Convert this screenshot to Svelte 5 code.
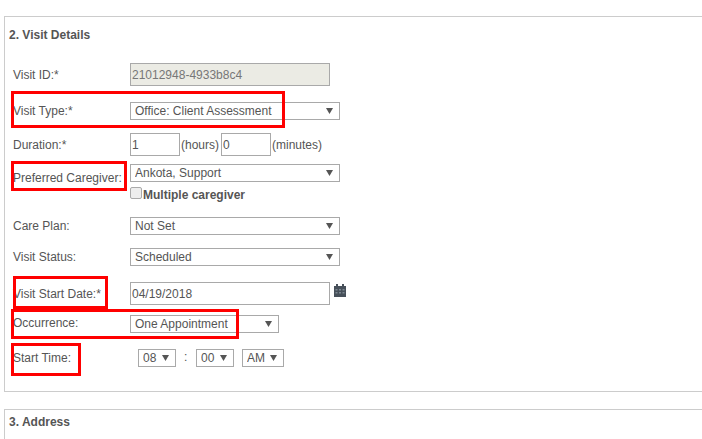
<script>
    // red review marks drawn over the form
    const marks = [
        { x: 11, y: 91, w: 274, h: 37 },
        { x: 11, y: 161, w: 116, h: 30 },
        { x: 13, y: 276, w: 95, h: 33 },
        { x: 11, y: 309, w: 228, h: 30 },
        { x: 11, y: 343, w: 70, h: 33 }
    ];
</script>

{#snippet picker(value, cls)}
    <div class="select {cls}">
        <select><option>{value}</option></select>
        <svg class="arrow" viewBox="0 0 8 8" aria-hidden="true"><path d="M0 1h8L4 8z" /></svg>
    </div>
{/snippet}

<div class="page">
    <section class="panel details">
        <h3>2. Visit Details</h3>

        <div class="row r-id">
            <label>Visit ID:*</label>
            <input class="wide readonly" value="21012948-4933b8c4" readonly />
        </div>
        <div class="row r-type">
            <label>Visit Type:*</label>
            {@render picker('Office: Client Assessment', 'full')}
        </div>
        <div class="row r-duration">
            <label>Duration:*</label>
            <input class="short" value="1" />
            <span class="unit">(hours)</span>
            <input class="short" value="0" />
            <span class="unit">(minutes)</span>
        </div>
        <div class="row r-caregiver">
            <label class="low">Preferred Caregiver:</label>
            <div class="stack">
                {@render picker('Ankota, Support', 'full')}
                <div class="multi"><span class="check"></span><b>Multiple caregiver</b></div>
            </div>
        </div>
        <div class="row r-plan">
            <label>Care Plan:</label>
            {@render picker('Not Set', 'full')}
        </div>
        <div class="row r-status">
            <label>Visit Status:</label>
            {@render picker('Scheduled', 'full')}
        </div>
        <div class="row r-date">
            <label>Visit Start Date:*</label>
            <input class="wide" value="04/19/2018" />
            <svg class="cal" viewBox="0 0 12 13" aria-hidden="true">
                <path d="M0 2h2V0h2v2h4V0h2v2h2v11H0z" fill="#47505a" />
                <path d="M1.5 5h2v1.5h-2zM5 5h2v1.5H5zM8.500 5h2v1.500h-2zM1.500 8h2v1.500h-2zM5 8h2v1.500H5zM8.500 8h2v1.500h-2z" fill="#7d8791" />
            </svg>
        </div>
        <div class="row r-occurrence">
            <label class="up">Occurrence:</label>
            {@render picker('One Appointment', 'mid')}
        </div>
        <div class="row r-time">
            <label>Start Time:</label>
            <div class="time">
                {@render picker('08', 'tiny')}
                <span class="colon">:</span>
                {@render picker('00', 'tiny')}
                {@render picker('AM', 'ampm')}
            </div>
        </div>
    </section>

    <section class="panel address">
        <h3>3. Address</h3>
    </section>

    {#each marks as m}
        <div class="mark" style="left:{m.x}px;top:{m.y}px;width:{m.w}px;height:{m.h}px"></div>
    {/each}
</div>

<style>
    :global(body) {
        margin: 0;
        background: #fff;
    }

    .page {
        position: relative;
        height: 439px;
        overflow: hidden;
        padding: 16px 0 0 4px;
        box-sizing: border-box;
        font-family: "Liberation Sans", Arial, sans-serif;
        font-size: 12px;
        color: #555;
    }

    .panel {
        border: 1px solid #ccc;
        border-right: none;
        box-sizing: border-box;
    }

    .details {
        height: 376px;
    }

    .address {
        margin-top: 17px;
        height: 60px;
    }

    h3 {
        margin: 0;
        padding-left: 4px;
        font-size: 12px;
        line-height: 14px;
        font-weight: bold;
        color: #555;
    }

    .details h3 {
        padding-top: 11px;
    }

    .address h3 {
        padding-top: 5px;
    }

    .row {
        display: flex;
        align-items: center;
        padding-left: 8px;
    }

    label {
        flex: 0 0 117px;
        white-space: nowrap;
    }

    label.low {
        align-self: flex-start;
        padding-top: 7px;
    }

    label.up {
        padding-bottom: 3px;
    }

    input {
        font: inherit;
        color: inherit;
        box-sizing: border-box;
        margin: 0;
        height: 23px;
        padding: 0 1px;
        border: 1px solid #a9a9a9;
        background: #fff;
    }

    .wide {
        width: 200px;
    }

    .short {
        width: 50px;
    }

    .readonly {
        background: #ebebe4;
        color: #777;
    }

    .unit {
        margin: 0 2px 0 1px;
    }

    .select {
        position: relative;
        height: 18px;
        box-sizing: border-box;
    }

    .select select {
        appearance: none;
        display: block;
        width: 100%;
        height: 100%;
        margin: 0;
        padding: 0 0 0 4px;
        font: inherit;
        color: inherit;
        background: #fff;
        border: 1px solid #a9a9a9;
        border-radius: 0;
    }

    .arrow {
        position: absolute;
        right: 7px;
        top: 5px;
        width: 7px;
        height: 7px;
        fill: #555;
        pointer-events: none;
    }

    .full {
        width: 210px;
    }

    .mid {
        width: 149px;
    }

    .tiny {
        width: 38px;
    }

    .ampm {
        width: 42px;
        margin-left: 8px;
    }

    .stack {
        display: flex;
        flex-direction: column;
    }

    .multi {
        display: flex;
        align-items: center;
        height: 12px;
        margin-top: 6px;
    }

    .check {
        width: 12px;
        height: 12px;
        box-sizing: border-box;
        border: 1px solid #aaa;
        border-radius: 2px;
        background: #eee;
        margin-right: 1px;
        position: relative;
        top: -1px;
    }

    .multi b {
        position: relative;
        top: 1px;
    }

    .cal {
        width: 12px;
        height: 13px;
        margin: -6px 0 0 4px;
    }

    .time {
        display: flex;
        align-items: center;
        margin-left: 8px;
    }

    .colon {
        width: 20px;
        margin: 0 0 2px 0;
        padding-left: 8px;
        box-sizing: border-box;
    }

    .r-id { margin-top: 21px; }
    .r-type { margin-top: 16px; }
    .r-duration { margin-top: 13px; }
    .r-caregiver { margin-top: 8px; }
    .r-plan { margin-top: 17px; }
    .r-status { margin-top: 13px; }
    .r-date { margin-top: 16px; }
    .r-occurrence { margin-top: 10px; }
    .r-time { margin-top: 16px; }

    .mark {
        position: absolute;
        box-sizing: border-box;
        border: 3px solid #f00;
        pointer-events: none;
    }
</style>
